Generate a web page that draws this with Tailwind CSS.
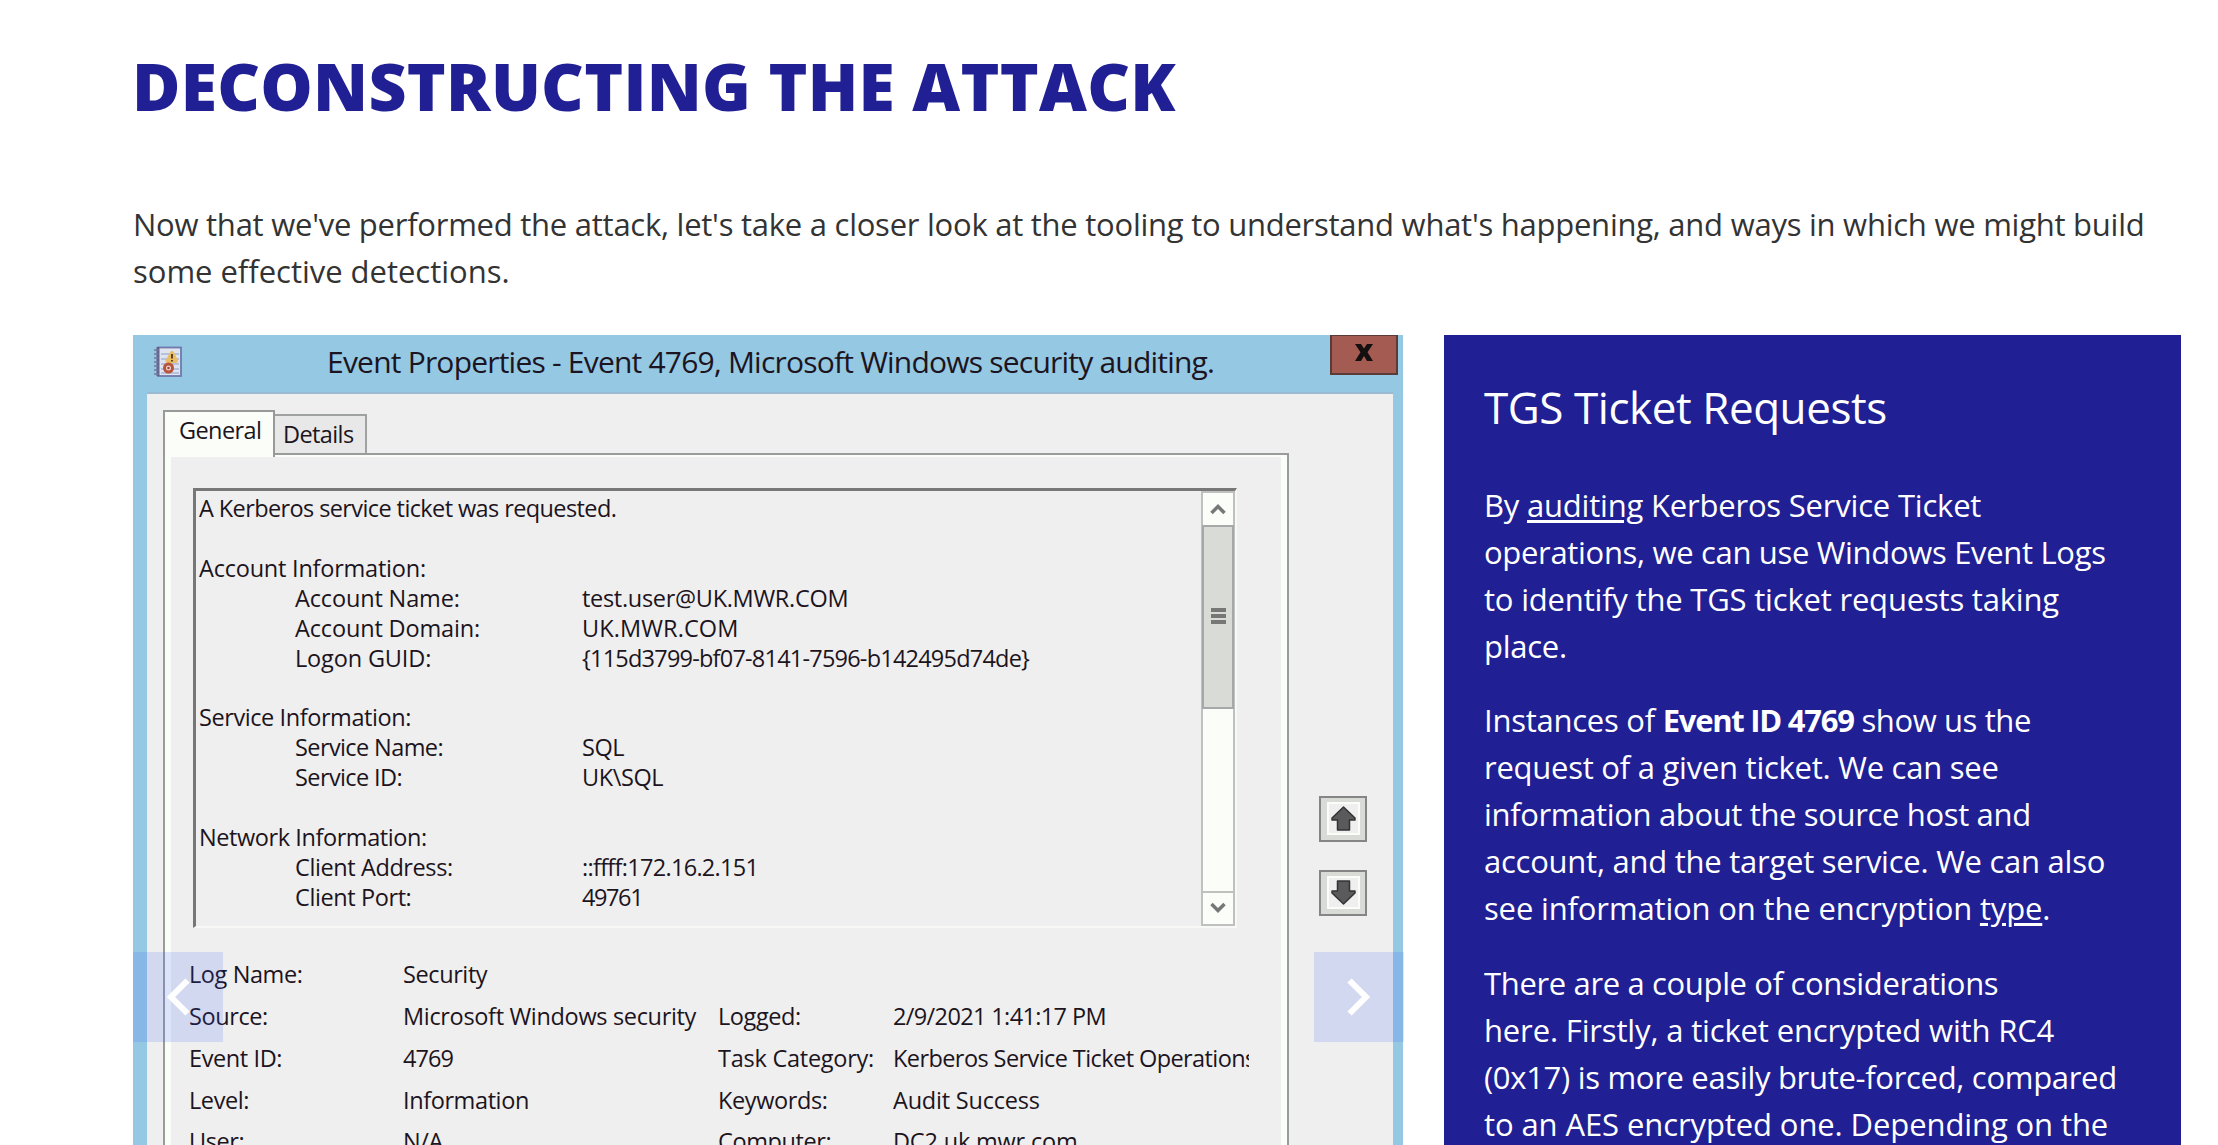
<!DOCTYPE html>
<html lang="en">
<head>
  <meta charset="UTF-8">
  <meta name="viewport" content="width=device-width, initial-scale=1.0">
  <title>Deconstructing the Attack</title>
  <script src="https://cdn.jsdelivr.net/npm/@tailwindcss/browser@4"></script>
</head>
<body class="bg-white font-['Open_Sans','Noto_Sans',sans-serif] text-[#333]">
  <main class="h-[1145px] overflow-hidden pl-[133px] pr-[37px] pt-[45px]">
    <h1 class="text-[66px] leading-[80px] font-extrabold tracking-[0.25px] text-[#201f94] whitespace-nowrap -ml-px">
      DECONSTRUCTING THE ATTACK
    </h1>
    <p class="mt-[76px] text-[31px] leading-[46.9px] tracking-[-0.25px] whitespace-nowrap">
      Now that we've performed the attack, let's take a closer look at the tooling to understand what's happening, and ways in which we might build<br>
      <span class="tracking-[-0.02px]">some effective detections.</span>
    </p>

    <div class="mt-10 flex gap-[41px]">
      <!-- Carousel -->
      <div class="relative w-[1270px] h-[810px] shrink-0">
        <div class="h-full overflow-hidden bg-[#94c8e3] text-[23.5px] text-[#1c1420]">
          <!-- Title bar -->
          <div class="flex items-start h-[57px] pl-5">
            <svg class="w-[30px] h-[32px] mt-[11px]" viewBox="0 0 30 32" fill="none">
              <rect x="5" y="1.500" width="23" height="28.500" fill="#dfe4f0" stroke="#7078ac" stroke-width="1.800"></rect>
              <path d="M8 8h18M8 13h18M8 18h18M8 23h18M8 27h18" stroke="#a9b5d6" stroke-width="1.300"></path>
              <path d="M5 1v29" stroke="#62628c" stroke-width="3"></path>
              <path d="M1 4h5M1 8h5M1 12h5M1 16h5M1 20h5M1 24h5M1 28h5" stroke="#77779a" stroke-width="1.700"></path>
              <path d="M17.500 5.500q1.500-1.500 3 0l4.500 9q0 2.500-2 2.500h-8.500q-2.500-.5-2-2.500z" fill="#e9bd68"></path>
              <path d="M19 8v4.500M19 14v1.500" stroke="#5e431f" stroke-width="2"></path>
              <circle cx="15.500" cy="22" r="4" fill="#eed8ce" stroke="#b8543b" stroke-width="3"></circle>
              <circle cx="15.500" cy="22" r="1.300" fill="#a34632"></circle>
            </svg>
            <div class="ml-[144px] w-[1003px] text-[30px] leading-[54px] tracking-[-0.79px] whitespace-nowrap">
              Event Properties - Event 4769, Microsoft Windows security auditing.
            </div>
            <div class="flex items-center justify-center w-[68px] h-[40px] pb-1 bg-[#a35b52] border-2 border-t border-[#5c3a38]">
              <svg class="w-[18px] h-[17px]" viewBox="0 0 18 17" fill="#140f10">
                <path d="M0 0h6l3 4.500L12 0h6l-5.500 8.300L18 17h-6l-3-5-3 5H0l5.500-8.700z"></path>
              </svg>
            </div>
          </div>

          <div class="flex h-[753px] ml-[14px] mr-[10px] pl-4 pt-[16px] bg-[#efefef] border-t-2 border-[#9ab9d3]">
            <div class="w-[1126px]">
              <!-- Tabs -->
              <div class="flex items-start h-[43px] leading-[30px] tracking-[-0.6px]">
                <div class="relative z-10 w-[112px] h-[47px] pl-[14px] pt-[3px] bg-[#fafdf8] border-2 border-b-0 border-[#999]">General</div>
                <div class="w-[92px] h-[39px] mt-[4px] pl-[8px] pt-[3px] bg-[#e7e8e7] border-2 border-l-0 border-b-0 border-[#a0a2a2]">Details</div>
              </div>

              <div class="h-[710px] border-2 border-b-0 border-[#9a9c9c]">
                <div class="h-full border-x-6 border-t-2 border-[#fafdf8] pl-[22px] pt-[31px]">
                  <!-- Event description -->
                  <div class="flex w-[1044px] h-[440px] border-t-3 border-l-3 border-b-2 border-r-2 border-t-[#777] border-l-[#777] border-b-[#f8f8f7] border-r-[#f8f8f7]">
                    <div class="w-[1005px] pl-[3px] pt-[3px] leading-[29.93px] tracking-[-0.6px] whitespace-nowrap">
                      <div>A Kerberos service ticket was requested.</div>
                      <div>&nbsp;</div>
                      <div class="tracking-[-0.22px]">Account Information:</div>
                      <div class="grid grid-cols-[287px_1fr] pl-24">
                        <span class="tracking-[-0.15px]">Account Name:</span><span class="tracking-[-0.3px]">test.user@UK.MWR.COM</span>
                        <span class="tracking-[-0.15px]">Account Domain:</span><span class="tracking-[0.1px]">UK.MWR.COM</span>
                        <span class="tracking-[-0.15px]">Logon GUID:</span><span class="tracking-[-0.78px]">{115d3799-bf07-8141-7596-b142495d74de}</span>
                      </div>
                      <div>&nbsp;</div>
                      <div class="tracking-[-0.42px]">Service Information:</div>
                      <div class="grid grid-cols-[287px_1fr] pl-24">
                        <span>Service Name:</span><span class="tracking-[-0.4px]">SQL</span>
                        <span>Service ID:</span><span class="tracking-[-0.4px]">UK\SQL</span>
                      </div>
                      <div>&nbsp;</div>
                      <div class="tracking-[-0.42px]">Network Information:</div>
                      <div class="grid grid-cols-[287px_1fr] pl-24">
                        <span class="tracking-[-0.4px]">Client Address:</span><span class="tracking-[-0.7px]">::ffff:172.16.2.151</span>
                        <span class="tracking-[-0.4px]">Client Port:</span><span class="tracking-[-1.4px]">49761</span>
                      </div>
                    </div>
                    <!-- Scrollbar -->
                    <div class="flex flex-col w-[34px] h-[435px] bg-[#fafdf8] border-2 border-[#bfc1bf]">
                      <div class="flex items-center justify-center h-[32px]">
                        <svg class="w-4 h-3" viewBox="0 0 16 12" fill="none" stroke="#777" stroke-width="3.500"><path d="M1.500 10L8 3.500l6.500 6.500"></path></svg>
                      </div>
                      <div class="flex flex-col items-center gap-[2px] h-[184px] -mx-px pt-[81px] bg-[#d9dbd6] border-2 border-[#a5a8a8]">
                        <div class="w-[15px] h-1 bg-[#777]"></div>
                        <div class="w-[15px] h-1 bg-[#777]"></div>
                        <div class="w-[15px] h-1 bg-[#777]"></div>
                      </div>
                      <div class="flex items-center justify-center h-[33px] mt-auto border-t-2 border-[#bfc1bf]">
                        <svg class="w-4 h-3" viewBox="0 0 16 12" fill="none" stroke="#777" stroke-width="3.500"><path d="M1.500 2L8 8.500 14.500 2"></path></svg>
                      </div>
                    </div>
                  </div>

                  <!-- Event fields -->
                  <div class="grid grid-cols-[214px_315px_175px_356px] w-[1060px] -ml-[4px] mt-[26px] leading-[41.9px] tracking-[-0.4px] whitespace-nowrap">
                    <span>Log Name:</span><span class="col-span-3">Security</span>
                    <span>Source:</span><span class="tracking-[-0.33px]">Microsoft Windows security</span><span>Logged:</span><span class="tracking-[-0.63px]">2/9/2021 1:41:17 PM</span>
                    <span>Event ID:</span><span class="tracking-[-0.9px]">4769</span><span class="tracking-[-0.25px]">Task Category:</span><span class="overflow-hidden tracking-[-0.58px]">Kerberos Service Ticket Operations</span>
                    <span>Level:</span><span>Information</span><span>Keywords:</span><span class="tracking-[-0.2px]">Audit Success</span>
                    <span>User:</span><span>N/A</span><span>Computer:</span><span class="tracking-[-0.2px]">DC2.uk.mwr.com</span>
                  </div>
                </div>
              </div>
            </div>

            <!-- Previous / next event -->
            <div class="flex flex-col gap-[28px] ml-[30px] pt-[386px]">
              <div class="flex items-center justify-center w-[48px] h-[46px] bg-[#d9dbd6] border-2 border-[#858585]">
                <div class="flex items-center justify-center w-[33px] h-[33px] bg-[#efefef] border-2 border-[#fafdf8]">
                  <svg class="w-[25px] h-[25px]" viewBox="0 0 25 25" fill="#5a5a5a" stroke="#333" stroke-width="1.500" stroke-linejoin="round"><path d="M12.500 1L24 12v2h-5.500v10h-12V14H1v-2z"></path></svg>
                </div>
              </div>
              <div class="flex items-center justify-center w-[48px] h-[46px] bg-[#d9dbd6] border-2 border-[#858585]">
                <div class="flex items-center justify-center w-[33px] h-[33px] bg-[#efefef] border-2 border-[#fafdf8]">
                  <svg class="w-[25px] h-[25px]" viewBox="0 0 25 25" fill="#5a5a5a" stroke="#333" stroke-width="1.500" stroke-linejoin="round"><path d="M12.500 24L24 13v-2h-5.500V1h-12v10H1v2z"></path></svg>
                </div>
              </div>
            </div>
          </div>
        </div>

        <!-- Carousel controls -->
        <button class="absolute left-0 top-[617px] w-[90px] h-[90px] flex items-center justify-center bg-[#3456fd]/15">
          <svg class="w-[24px] h-[38px]" viewBox="0 0 24 38" fill="none" stroke="white" stroke-width="6"><path d="M21.500 2.500L5 19l16.500 16.500"></path></svg>
        </button>
        <button class="absolute left-[1181px] top-[617px] w-[90px] h-[90px] flex items-center justify-center bg-[#3456fd]/15">
          <svg class="w-[24px] h-[38px]" viewBox="0 0 24 38" fill="none" stroke="white" stroke-width="6"><path d="M2.500 2.500L19 19 2.500 35.500"></path></svg>
        </button>
      </div>

      <!-- Slide text -->
      <aside class="w-[737px] h-[810px] shrink-0 overflow-hidden bg-[#201f94] text-white pl-[40px] pt-[42px] text-[31px] leading-[46.9px] tracking-[-0.25px] whitespace-nowrap">
        <h2 class="text-[44px] leading-[60px] tracking-[-0.45px]">TGS Ticket Requests</h2>
        <p class="mt-[45px]">
          <span class="tracking-[-0.2px]">By <a class="underline decoration-3 underline-offset-3">auditing</a> Kerberos Service Ticket</span><br>
          <span class="tracking-[-0.32px]">operations, we can use Windows Event Logs</span><br>
          <span class="tracking-[-0.19px]">to identify the TGS ticket requests taking</span><br>
          place.
        </p>
        <p class="mt-7">
          Instances of <strong class="font-bold tracking-[-1.26px]">Event ID 4769</strong> <span class="tracking-[-0.4px]">show us the</span><br>
          request of a given ticket. We can see<br>
          <span class="tracking-[-0.35px]">information about the source host and</span><br>
          account, and the target service. We can also<br>
          <span class="tracking-[-0.15px]">see information on the encryption <a class="underline decoration-3 underline-offset-3">type</a>.</span>
        </p>
        <p class="mt-7">
          <span class="tracking-[-0.35px]">There are a couple of considerations</span><br>
          <span class="tracking-[-0.15px]">here. Firstly, a ticket encrypted with RC4</span><br>
          <span class="tracking-[-0.3px]">(0x17) is more easily brute-forced, compared</span><br>
          <span class="tracking-[-0.1px]">to an AES encrypted one. Depending on the</span>
        </p>
      </aside>
    </div>
  </main>
</body>
</html>
